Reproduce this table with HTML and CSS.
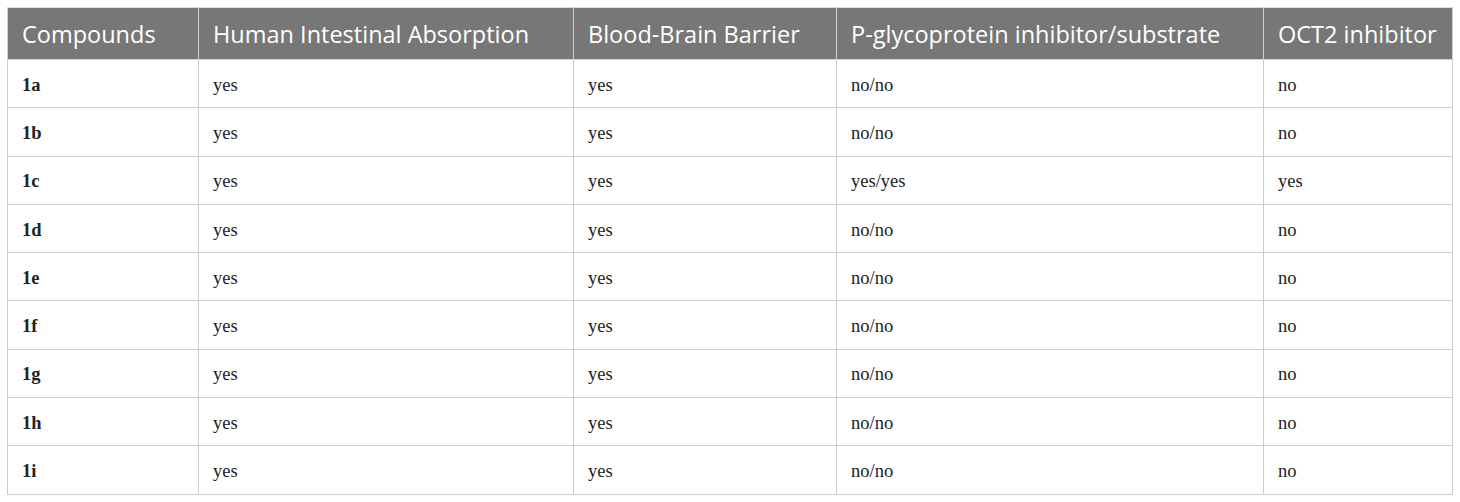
FILE: index.html
```html
<!DOCTYPE html>
<html>
<head>
<meta charset="utf-8">
<link rel="stylesheet" href="styles.css">
</head>
<body>
<table class="data">
<colgroup>
<col class="c1"><col class="c2"><col class="c3"><col class="c4"><col class="c5">
</colgroup>
<thead>
<tr><th>Compounds</th><th>Human Intestinal Absorption</th><th>Blood-Brain Barrier</th><th>P-glycoprotein inhibitor/substrate</th><th>OCT2 inhibitor</th></tr>
</thead>
<tbody>
<tr><td class="id">1a</td><td>yes</td><td>yes</td><td>no/no</td><td>no</td></tr>
<tr><td class="id">1b</td><td>yes</td><td>yes</td><td>no/no</td><td>no</td></tr>
<tr><td class="id">1c</td><td>yes</td><td>yes</td><td>yes/yes</td><td>yes</td></tr>
<tr><td class="id">1d</td><td>yes</td><td>yes</td><td>no/no</td><td>no</td></tr>
<tr><td class="id">1e</td><td>yes</td><td>yes</td><td>no/no</td><td>no</td></tr>
<tr><td class="id">1f</td><td>yes</td><td>yes</td><td>no/no</td><td>no</td></tr>
<tr><td class="id">1g</td><td>yes</td><td>yes</td><td>no/no</td><td>no</td></tr>
<tr><td class="id">1h</td><td>yes</td><td>yes</td><td>no/no</td><td>no</td></tr>
<tr><td class="id">1i</td><td>yes</td><td>yes</td><td>no/no</td><td>no</td></tr>
</tbody>
</table>
</body>
</html>
```
FILE: styles.css
```css
html, body {
  margin: 0;
  padding: 0;
  background: #fff;
}
body {
  padding: 7px 0 0 7px;
}
.data {
  border-collapse: collapse;
  table-layout: fixed;
  width: 1445px;
}
.c1 { width: 191px; }
.c2 { width: 375px; }
.c3 { width: 263px; }
.c4 { width: 427px; }
.c5 { width: 189px; }
.data th {
  background: #777777;
  color: #fff;
  font-family: "Open Sans", "Noto Sans", sans-serif;
  font-weight: 400;
  font-size: 23.5px;
  text-align: left;
  height: 52px;
  padding: 0 0 0 14px;
  box-sizing: border-box;
  border: 1px solid #cfcfcf;
  border-top: 1px solid #dcdcdc;
  vertical-align: middle;
  white-space: nowrap;
}
.data td {
  font-family: "Liberation Serif", "Times New Roman", serif;
  font-size: 18.5px;
  color: #222;
  height: 48.3px;
  padding: 3px 0 0 14px;
  box-sizing: border-box;
  border: 1px solid #cccccc;
  vertical-align: middle;
}
.data td.id {
  font-weight: 700;
}
```
